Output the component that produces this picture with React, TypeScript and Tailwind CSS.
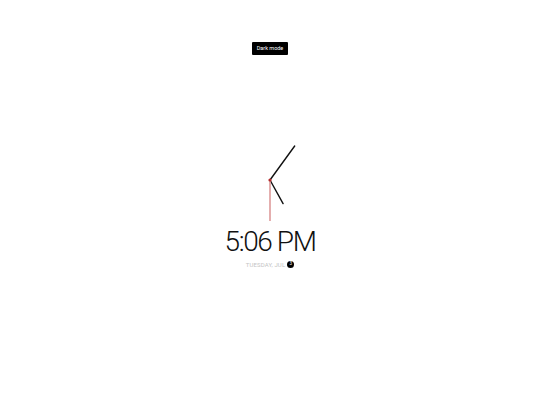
import * as React from "react";

function Clock() {
  const cx = 50;
  const cy = 50;
  const hand = (deg: number, len: number) => {
    const r = (deg * Math.PI) / 180;
    return { x2: cx + Math.sin(r) * len, y2: cy - Math.cos(r) * len };
  };
  const min = hand(36, 42);
  const hour = hand(151, 27);
  const sec = hand(180, 41);
  return (
    <svg width="100" height="100" viewBox="0 0 100 100">
      <line x1={cx} y1={cy} {...hour} stroke="#111" strokeWidth="1.4" strokeLinecap="round" />
      <line x1={cx} y1={cy} {...min} stroke="#111" strokeWidth="1.4" strokeLinecap="round" />
      <line x1={cx} y1={cy} {...sec} stroke="#d98c8c" strokeWidth="1.4" />
      <circle cx={cx} cy={cy} r="1.6" fill="#b22a2a" />
    </svg>
  );
}

export default function App() {
  return (
    <div className="flex h-[405px] w-[540px] flex-col items-center bg-white font-['Roboto','Liberation_Sans',sans-serif]">
      <button className="mt-[42px] flex h-[13px] items-center rounded-[1px] bg-black px-[5px] text-[5.5px] leading-none text-white">
        Dark mode
      </button>
      <div className="mt-[75px]">
        <Clock />
      </div>
      <div className="mt-[-2px] text-[28px] font-light leading-none tracking-[-0.05em] text-[#111]">5:06 PM</div>
      <div className="mt-[4px] flex items-center gap-[2px] text-[6px] uppercase tracking-[0.02em] text-[#c4c4c4]">
        <span>Tuesday, Jul</span>
        <span className="flex h-[7px] w-[7px] items-center justify-center rounded-full bg-black text-[4.5px] text-white">
          3
        </span>
      </div>
    </div>
  );
}
